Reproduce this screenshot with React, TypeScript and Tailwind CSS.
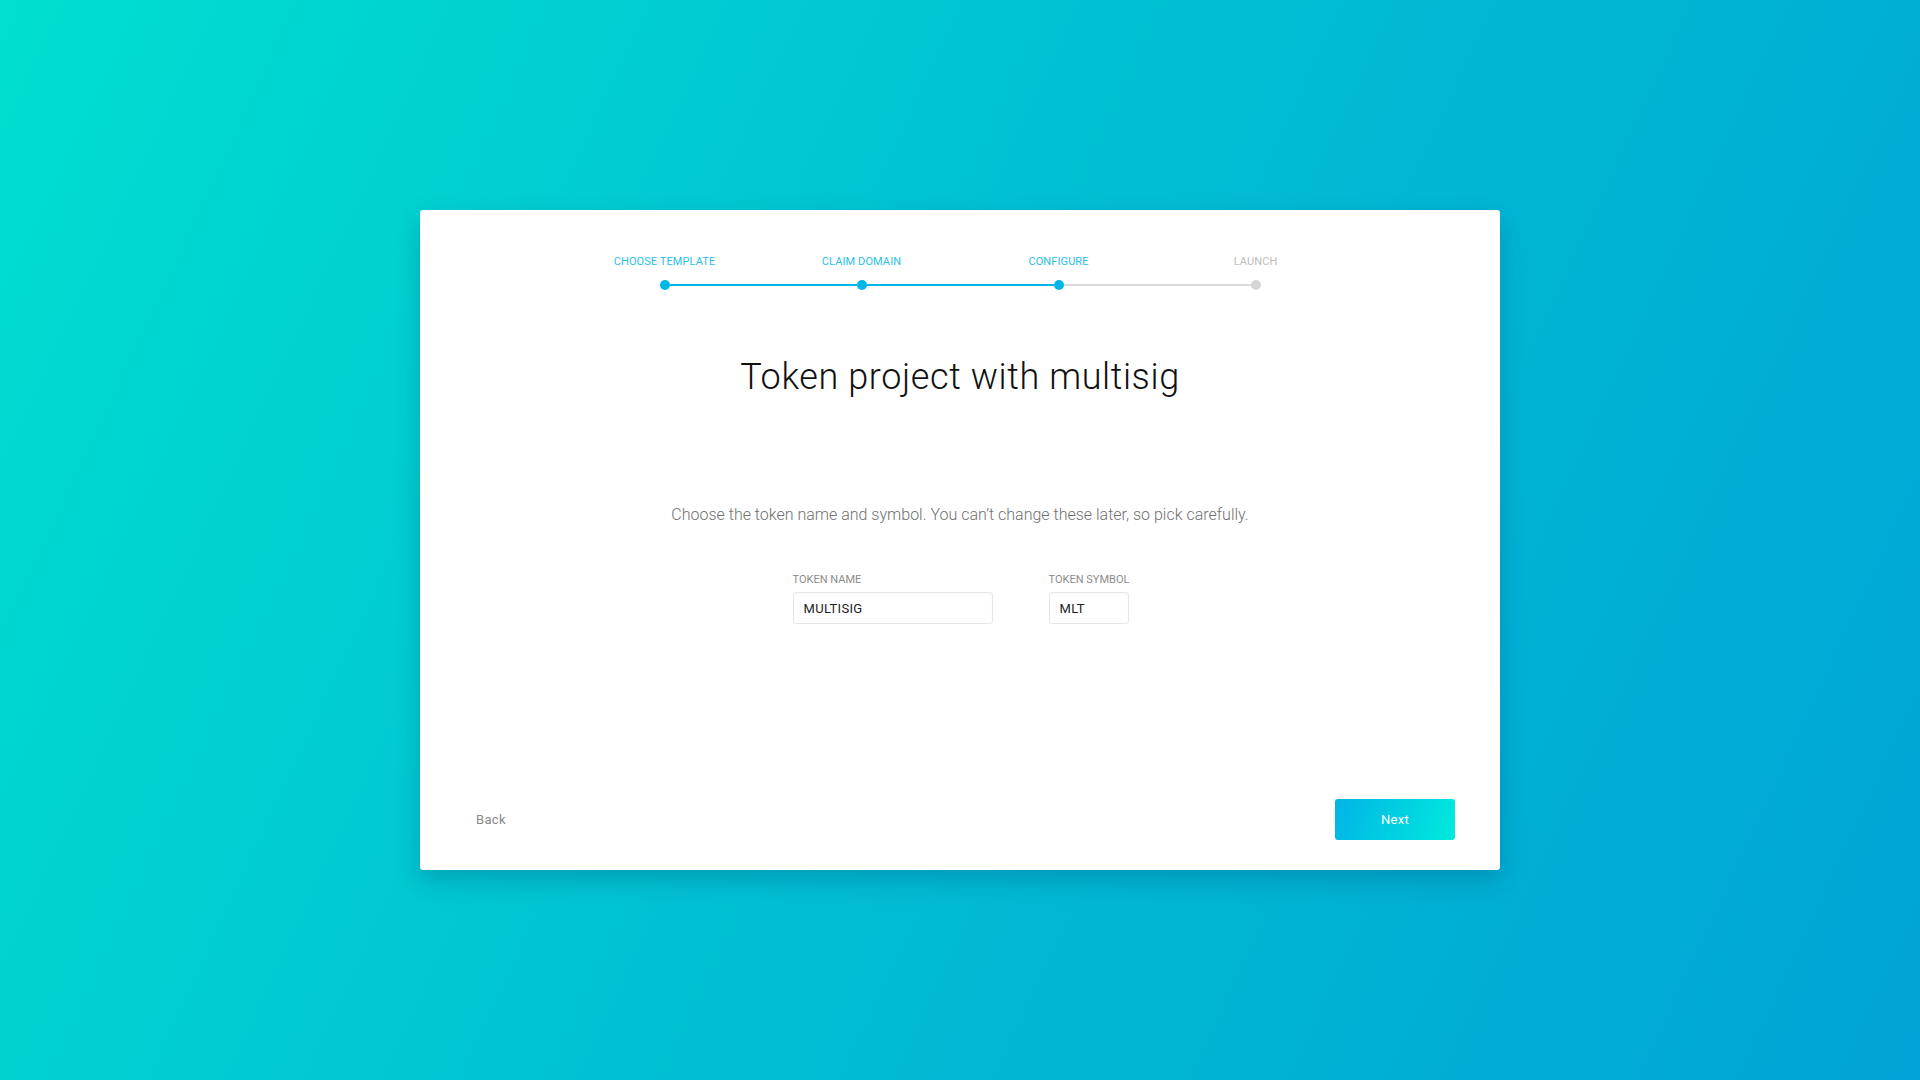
import { useState } from "react";

const steps = ["Choose template", "Claim domain", "Configure", "Launch"];
const active = 2;

function Stepper() {
  return (
    <div className="flex justify-center">
      {steps.map((label, i) => {
        const done = i <= active;
        const leftOn = i <= active;
        const rightOn = i < active;
        return (
          <div key={label} className="w-[197px] flex flex-col items-center">
            <span
              className={`text-[11px] leading-[14px] uppercase tracking-[0.1px] ${
                done ? "text-[#2cc0e6]" : "text-[#bdbdbd]"
              }`}
            >
              {label}
            </span>
            <div className="mt-[11px] w-full flex items-center">
              <div
                className={`flex-1 h-[2px] ${
                  i === 0 ? "bg-transparent" : leftOn ? "bg-[#00b6e6]" : "bg-[#dadada]"
                }`}
              />
              <div
                className={`w-[10px] h-[10px] rounded-full ${
                  done ? "bg-[#00b6e6]" : "bg-[#d6d6d6]"
                }`}
              />
              <div
                className={`flex-1 h-[2px] ${
                  i === steps.length - 1
                    ? "bg-transparent"
                    : rightOn
                    ? "bg-[#00b6e6]"
                    : "bg-[#dadada]"
                }`}
              />
            </div>
          </div>
        );
      })}
    </div>
  );
}

function Field({
  label,
  value,
  onChange,
  width,
}: {
  label: string;
  value: string;
  onChange: (v: string) => void;
  width: string;
}) {
  return (
    <label className="flex flex-col">
      <span className="text-[11px] leading-[14px] uppercase text-[#8c8c8c]">
        {label}
      </span>
      <input
        value={value}
        onChange={(e) => onChange(e.target.value)}
        className={`${width} mt-[5px] h-[32px] px-[10px] text-[13px] text-[#222] border border-[#e6e6e6] rounded-[3px] outline-none shadow-[inset_0_1px_2px_rgba(0,0,0,0.04)] tracking-[0.3px]`}
      />
    </label>
  );
}

export default function App() {
  const [name, setName] = useState("MULTISIG");
  const [symbol, setSymbol] = useState("MLT");

  return (
    <div
      className="min-h-screen w-full flex items-center justify-center bg-[linear-gradient(115deg,#00dfd0_0%,#00bed3_50%,#00a4d6_100%)]"
      style={{ fontFamily: "Roboto, 'Noto Sans', sans-serif" }}
    >
      <div className="w-[1080px] h-[660px] bg-white rounded-[3px] shadow-[0_10px_24px_rgba(0,60,100,0.25)] flex flex-col pt-[45px]">
        <Stepper />

        <h1 className="mt-[65px] text-center text-[36px] leading-[44px] font-light tracking-[0.6px] text-[#111]">
          Token project with multisig
        </h1>

        <p className="mt-[104px] text-center text-[16px] leading-[24px] text-[#707070] font-light">
          Choose the token name and symbol. You can’t change these later, so pick carefully.
        </p>

        <div className="mt-[46px] flex justify-center gap-[56px] pl-[2px]">
          <Field label="Token name" value={name} onChange={setName} width="w-[200px]" />
          <Field label="Token symbol" value={symbol} onChange={setSymbol} width="w-[80px]" />
        </div>

        <div className="mt-auto flex items-center justify-between pl-[56px] pr-[45px] pb-[30px]">
          <button className="text-[13px] text-[#888] tracking-[0.3px]">Back</button>
          <button className="w-[120px] h-[41px] rounded-[3px] text-white text-[13px] tracking-[0.3px] bg-[linear-gradient(110deg,#00b4e6,#00eadd)]">
            Next
          </button>
        </div>
      </div>
    </div>
  );
}
